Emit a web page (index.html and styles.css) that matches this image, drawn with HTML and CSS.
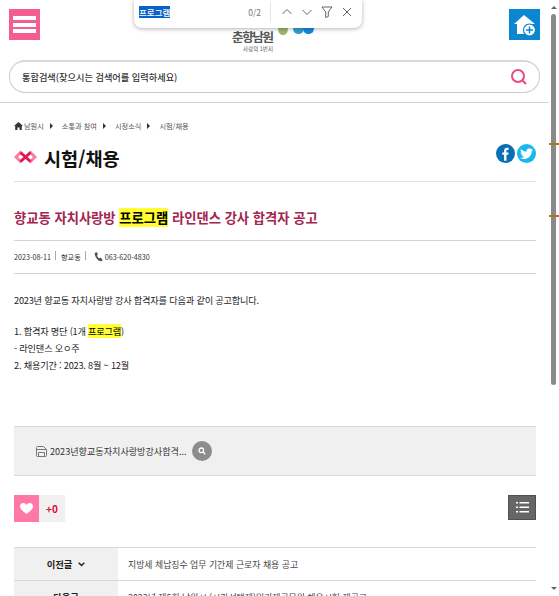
FILE: index.html
```html
<!DOCTYPE html>
<html lang="ko">
<head>
  <meta charset="UTF-8" />
  <meta name="viewport" content="width=device-width, initial-scale=1.0"/>
  <title>시험/채용</title>
  <link rel="stylesheet" href="styles.css">
</head>
<body>
  <header class="header">
    <div class="header-top">
      <a href="#" class="menu-button"><span></span><span></span><span></span></a>
      <div class="logo">
        <div class="logo-row">
          <div class="logo-text">춘향남원</div>
          <svg class="logo-mark" width="36" height="10" viewBox="0 0 36 10">
            <path d="M0 0h10c0 6-2 8-5 8S0 6 0 0z" fill="#9db56b"/>
            <path d="M15 0h11c0 5-2 7-5.500 7S15 5 15 0z" fill="#2f9fd0"/>
            <path d="M25 0h11c0 5-2 7-5.500 7S25 5 25 0z" fill="#1589dc"/>
          </svg>
        </div>
        <div class="logo-sub">사랑의 1번지</div>
      </div>
      <a href="#" class="home-button">
        <svg width="24" height="24" viewBox="0 0 24 24">
          <path d="M11 2 1 11h3v10h9V11h0L22 11z" fill="#fff"/>
          <circle cx="16.500" cy="17" r="6" fill="#fff" stroke="#0b86d0" stroke-width="1.200"/>
          <path d="M16.500 13.500v7M13 17h7" stroke="#0b86d0" stroke-width="1.500"/>
        </svg>
      </a>
    </div>
    <div class="search-box">
      <span class="search-text">통합검색(찾으시는 검색어를 입력하세요)</span>
      <svg width="18" height="18" viewBox="0 0 18 18" fill="none" stroke="#f0487a" stroke-width="2">
        <circle cx="8" cy="8" r="6"/>
        <path d="m12.500 12.500 3.500 3.500"/>
      </svg>
    </div>
  </header>

  <main class="content">
    <nav class="breadcrumb">
      <svg width="9" height="8" viewBox="0 0 9 8"><path d="M4.500 0 0 4h1.200v4h2.200V5.500h2.200V8h2.200V4H9z" fill="#333"/></svg>
      <span>남원시</span><i class="crumb-arrow"></i>
      <span>소통과 참여</span><i class="crumb-arrow"></i>
      <span>시정소식</span><i class="crumb-arrow"></i>
      <span>시험/채용</span>
    </nav>

    <div class="page-title-row">
      <h1 class="page-title">
        <svg width="23" height="14" viewBox="0 0 23 14" fill="none" stroke-width="3">
          <path d="M7.500 1.500 2 7l5.500 5.500" stroke="#f77ba6"/>
          <path d="M15.500 1.500 21 7l-5.500 5.500" stroke="#f77ba6"/>
          <path d="m6.500 2.500 10 9M16.500 2.500l-10 9" stroke="#e2184f"/>
        </svg>
        시험/채용
      </h1>
      <div class="share">
        <a href="#" class="share-icon facebook">
          <svg width="20" height="20" viewBox="0 0 20 20"><path d="M8.500 17V10.800H6.600V8.300h1.900V6.600C8.500 4.500 9.700 3.500 11.500 3.500h1.700v2.400h-1.100c-.8 0-1.100.4-1.100 1.100v1.300h2.200l-.3 2.500h-1.900V17z" fill="#fff"/></svg>
        </a>
        <a href="#" class="share-icon twitter">
          <svg width="20" height="20" viewBox="0 0 20 20"><path d="M17 5.400c-.5.200-1 .4-1.600.4.600-.3 1-.9 1.200-1.500-.5.300-1.100.5-1.800.7a2.800 2.800 0 0 0-4.800 2.600C7.700 7.500 5.600 6.400 4.200 4.700c-.7 1.300-.3 2.900.9 3.700-.5 0-.9-.1-1.300-.3 0 1.400 1 2.500 2.300 2.800-.4.100-.8.100-1.300 0 .4 1.100 1.400 1.900 2.600 1.900A5.700 5.700 0 0 1 3.200 14a8 8 0 0 0 12.300-7.100c.6-.4 1.100-.9 1.500-1.500z" fill="#fff"/></svg>
        </a>
      </div>
    </div>

    <h2 class="post-title">향교동 자치사랑방 <mark>프로그램</mark> 라인댄스 강사 합격자 공고</h2>

    <div class="post-meta">
      <span>2023-08-11</span><i class="meta-bar"></i>
      <span>향교동</span><i class="meta-bar"></i>
      <span class="meta-phone">
        <svg width="9" height="10" viewBox="0 0 9 10"><path d="M1.500.5 3 .2l1 2.200-1 .9c.3 1.300 1 2.300 2.200 3l1.100-.7L8.500 7.500 8 9c-1 .6-2.500.2-4-1.100C1.800 6 .6 3 .7 1.500z" fill="#555"/></svg>
        063-620-4830
      </span>
    </div>

    <div class="post-body">
      <p>2023년 향교동 자치사랑방 강사 합격자를 다음과 같이 공고합니다.</p>
      <p class="gap">1. 합격자 명단 (1개 <mark>프로그램</mark>)</p>
      <p>- 라인댄스 오ㅇ주</p>
      <p>2. 채용기간 : 2023. 8월 ~ 12월</p>
    </div>

    <div class="file-box">
      <svg width="11" height="11" viewBox="0 0 11 11" fill="none" stroke="#777"><path d="M.5 1.500a1 1 0 0 1 1-1h6l3 3v6a1 1 0 0 1-1 1h-8a1 1 0 0 1-1-1z"/><path d="M.5 3.500h10M2.500 6.500h6v4h-6z"/></svg>
      <span>2023년향교동자치사랑방강사합격...</span>
      <a href="#" class="file-view">
        <svg width="8" height="8" viewBox="0 0 8 8" fill="none" stroke="#fff" stroke-width="1.300"><circle cx="3.300" cy="3.300" r="2.300"/><path d="m5 5 2.300 2.300"/></svg>
      </a>
    </div>

    <div class="actions">
      <div class="like">
        <a href="#" class="like-button">
          <svg width="13" height="11" viewBox="0 0 13 11"><path d="M6.500 11C2 7.500 0 5.800 0 3.300 0 1.400 1.400 0 3.200 0c1.300 0 2.500.7 3.300 1.900C7.300.7 8.500 0 9.800 0 11.600 0 13 1.400 13 3.300c0 2.500-2 4.200-6.500 7.700z" fill="#fff"/></svg>
        </a>
        <span class="like-count">+0</span>
      </div>
      <a href="#" class="list-button">
        <svg width="13" height="11" viewBox="0 0 13 11" fill="#fff"><path d="M0 0h2v1.500H0zM3.500 0H13v1.500H3.500zM0 4.500h2V6H0zM3.500 4.500H13V6H3.500zM0 9h2v1.500H0zM3.500 9H13v1.500H3.500z"/></svg>
      </a>
    </div>

    <div class="post-nav">
      <div class="nav-row">
        <div class="nav-label">이전글 <svg width="7" height="5" viewBox="0 0 7 5" fill="none" stroke="#222" stroke-width="1.500"><path d="m.7.7 2.800 2.800L6.300.7"/></svg></div>
        <div class="nav-text">지방세 체납징수 업무 기간제 근로자 채용 공고</div>
      </div>
      <div class="nav-row">
        <div class="nav-label">다음글</div>
        <div class="nav-text">2023년 제5회 남원시 (시간선택제)임기제공무원 채용시험 재공고</div>
      </div>
    </div>
  </main>

  <!-- 찾기 바 -->
  <div class="find-bar">
    <span class="find-input"><span class="find-selected">프로그램</span></span>
    <span class="find-count">0/2</span>
    <i class="find-divider"></i>
    <svg class="find-icon" width="12" height="12" viewBox="0 0 12 12"><path d="M1.500 8 6 3.500 10.500 8"/></svg>
    <svg class="find-icon" width="12" height="12" viewBox="0 0 12 12"><path d="M1.500 4 6 8.500 10.500 4"/></svg>
    <svg class="find-icon" width="12" height="12" viewBox="0 0 12 12"><path d="M1 1h10L7.300 6v4.500L4.700 11.500V6z"/></svg>
    <svg class="find-icon" width="12" height="12" viewBox="0 0 12 12"><path d="m2 2 8 8M10 2l-8 8"/></svg>
  </div>

  <!-- 스크롤바 -->
  <div class="scrollbar">
    <i class="scroll-up"></i>
    <i class="scroll-thumb"></i>
    <i class="scroll-mark mark-one"></i>
    <i class="scroll-mark mark-two"></i>
    <i class="scroll-down"></i>
  </div>
</body>
</html>
```

FILE: styles.css
```css
* {
  box-sizing: border-box;
  margin: 0;
  padding: 0;
}

html, body {
  height: 100%;
  overflow: hidden;
  background: #fff;
}

body {
  position: relative;
  width: 559px;
  font-family: "Noto Sans CJK KR", "Noto Sans", sans-serif;
  color: #333;
  font-size: 10px;
}

a {
  color: inherit;
  text-decoration: none;
}

mark {
  background: #ffff33;
  color: #000;
}

/* 상단 */
.header {
  width: 549px;
  height: 103px;
  padding: 9px 9px 0;
  border-bottom: 1px solid #d4d4d4;
}

.header-top {
  display: flex;
  justify-content: space-between;
  height: 51px;
}

.menu-button {
  display: flex;
  flex-direction: column;
  justify-content: center;
  gap: 2.500px;
  width: 31px;
  height: 31px;
  padding: 0 4px;
  background: #f45d8f;
}

.menu-button span {
  height: 4px;
  background: #fff;
}

.logo {
  width: 82px;
  margin-left: -3px;
  padding-top: 18px;
  color: #555;
}

.logo-row {
  display: flex;
  gap: 5px;
  height: 18px;
}

.logo-text {
  width: 41px;
  padding-top: 2px;
  font-size: 12.500px;
  font-weight: 700;
  line-height: 15px;
  letter-spacing: -1.300px;
  white-space: nowrap;
}

.logo-sub {
  width: 41px;
  font-size: 5.500px;
  line-height: 8px;
  text-align: right;
  white-space: nowrap;
}

.home-button {
  display: flex;
  align-items: center;
  justify-content: center;
  width: 31px;
  height: 31px;
  background: #0b86d0;
}

.search-box {
  display: flex;
  align-items: center;
  justify-content: space-between;
  height: 33px;
  padding: 0 11px 0 12px;
  border: 1px solid #ccc;
  border-top: 2px solid #d8d8d8;
  border-radius: 16px;
}

.search-text {
  font-size: 9.200px;
  font-weight: 500;
  color: #333;
}

/* 본문 */
.content {
  width: 536px;
  padding-left: 14px;
}

.breadcrumb {
  display: flex;
  align-items: center;
  gap: 1px;
  height: 16px;
  margin-top: 15px;
  font-size: 7.200px;
  color: #555;
}

.crumb-arrow {
  width: 0;
  height: 0;
  margin: 0 8px 0 5px;
  border-left: 3px solid #333;
  border-top: 3px solid transparent;
  border-bottom: 3px solid transparent;
}

.page-title-row {
  display: flex;
  justify-content: space-between;
  align-items: center;
  height: 48px;
  border-bottom: 1px solid #e0e0e0;
  padding-bottom: 1px;
}

.page-title {
  display: flex;
  align-items: center;
  gap: 7px;
  font-size: 18.600px;
  font-weight: 700;
  color: #111;
}

.share {
  display: flex;
  gap: 2px;
  margin-top: -7px;
}

.share-icon {
  display: flex;
  width: 19px;
  height: 19px;
  border-radius: 50%;
  align-items: center;
  justify-content: center;
}

.facebook {
  background: #0b6fb5;
}

.twitter {
  background: #16b8ee;
}

.post-title {
  height: 59px;
  padding-top: 26px;
  font-size: 13.300px;
  line-height: 20px;
  font-weight: 700;
  color: #a5234f;
  border-bottom: 1px solid #d4d4d4;
  white-space: nowrap;
}

.post-meta {
  display: flex;
  align-items: center;
  height: 33px;
  font-size: 7.200px;
  color: #333;
  border-bottom: 1px solid #d4d4d4;
}

.meta-bar {
  width: 1px;
  height: 9px;
  margin: -3px 5px 0 4px;
  background: #aaa;
}

.meta-phone {
  display: flex;
  align-items: center;
  gap: 2px;
  margin-left: 3px;
}

.post-body {
  height: 152px;
  padding-top: 18px;
  font-size: 9.200px;
  letter-spacing: -0.200px;
  line-height: 17px;
  color: #222;
}

.gap {
  margin-top: 14px;
}

.file-box {
  display: flex;
  align-items: center;
  gap: 3px;
  height: 50px;
  padding-left: 22px;
  background: #f0f0f0;
  border-top: 1px solid #d8d8d8;
  border-bottom: 1px solid #d8d8d8;
  font-size: 9.100px;
  color: #333;
}

.file-view {
  display: flex;
  align-items: center;
  justify-content: center;
  width: 20px;
  height: 20px;
  margin-left: 2px;
  border-radius: 50%;
  background: #8c8c8c;
}

.actions {
  display: flex;
  justify-content: space-between;
  height: 71px;
  padding-top: 19px;
}

.like {
  display: flex;
  height: 27px;
}

.like-button {
  display: flex;
  align-items: center;
  justify-content: center;
  width: 25px;
  background: #ff78a8;
}

.like-count {
  display: flex;
  align-items: center;
  justify-content: center;
  width: 26px;
  background: #f0f0f0;
  color: #d9083f;
  font-weight: 700;
}

.list-button {
  display: flex;
  align-items: center;
  justify-content: center;
  width: 28px;
  height: 25px;
  background: #666;
  border: 1px solid #505050;
}

.post-nav {
  border-top: 1px solid #d8d8d8;
}

.nav-row {
  display: flex;
  height: 33px;
  border-bottom: 1px solid #d8d8d8;
}

.nav-label {
  display: flex;
  align-items: center;
  justify-content: center;
  gap: 6px;
  width: 104px;
  background: #f0f0f0;
  font-size: 9.300px;
  font-weight: 700;
  color: #222;
}

.nav-text {
  display: flex;
  align-items: center;
  padding-left: 10px;
  font-size: 8.900px;
  color: #444;
}

/* 찾기 바 */
.find-bar {
  position: absolute;
  top: 0;
  left: 134px;
  display: flex;
  align-items: center;
  width: 228px;
  height: 28px;
  padding: 0 9px 4px 5px;
  background: #fff;
  border-radius: 0 0 8px 8px;
  box-shadow: 0 1px 4px rgba(0, 0, 0, 0.3);
}

.find-input {
  flex: 1;
  font-size: 8.500px;
  font-weight: 500;
}

.find-selected {
  background: #0a63c9;
  color: #fff;
}

.find-count {
  margin-right: 9px;
  font-size: 8.500px;
  color: #777;
}

.find-divider {
  width: 1px;
  height: 22px;
  margin-right: 10px;
  background: #e4e4e4;
}

.find-icon {
  margin-left: 8px;
  fill: none;
  stroke: #555;
  stroke-width: 0.900;
}

.find-divider + .find-icon {
  margin-left: 0;
}

/* 스크롤바 */
.scrollbar {
  position: absolute;
  top: 0;
  right: 0;
  width: 10px;
  height: 596px;
  background: #fff;
}

.scroll-up, .scroll-down {
  position: absolute;
  left: 2px;
  width: 0;
  height: 0;
  border-left: 3px solid transparent;
  border-right: 3px solid transparent;
}

.scroll-up {
  top: 6px;
  border-bottom: 3px solid #666;
}

.scroll-down {
  bottom: 6px;
  border-top: 3px solid #666;
}

.scroll-thumb {
  position: absolute;
  top: 14px;
  left: 2px;
  width: 5px;
  height: 371px;
  border-radius: 3px;
  background: #8a8a8a;
}

.scroll-mark {
  position: absolute;
  left: 0;
  width: 10px;
  height: 2px;
  background: #b8731a;
}

.mark-one {
  top: 143px;
}

.mark-two {
  top: 215px;
}
```
